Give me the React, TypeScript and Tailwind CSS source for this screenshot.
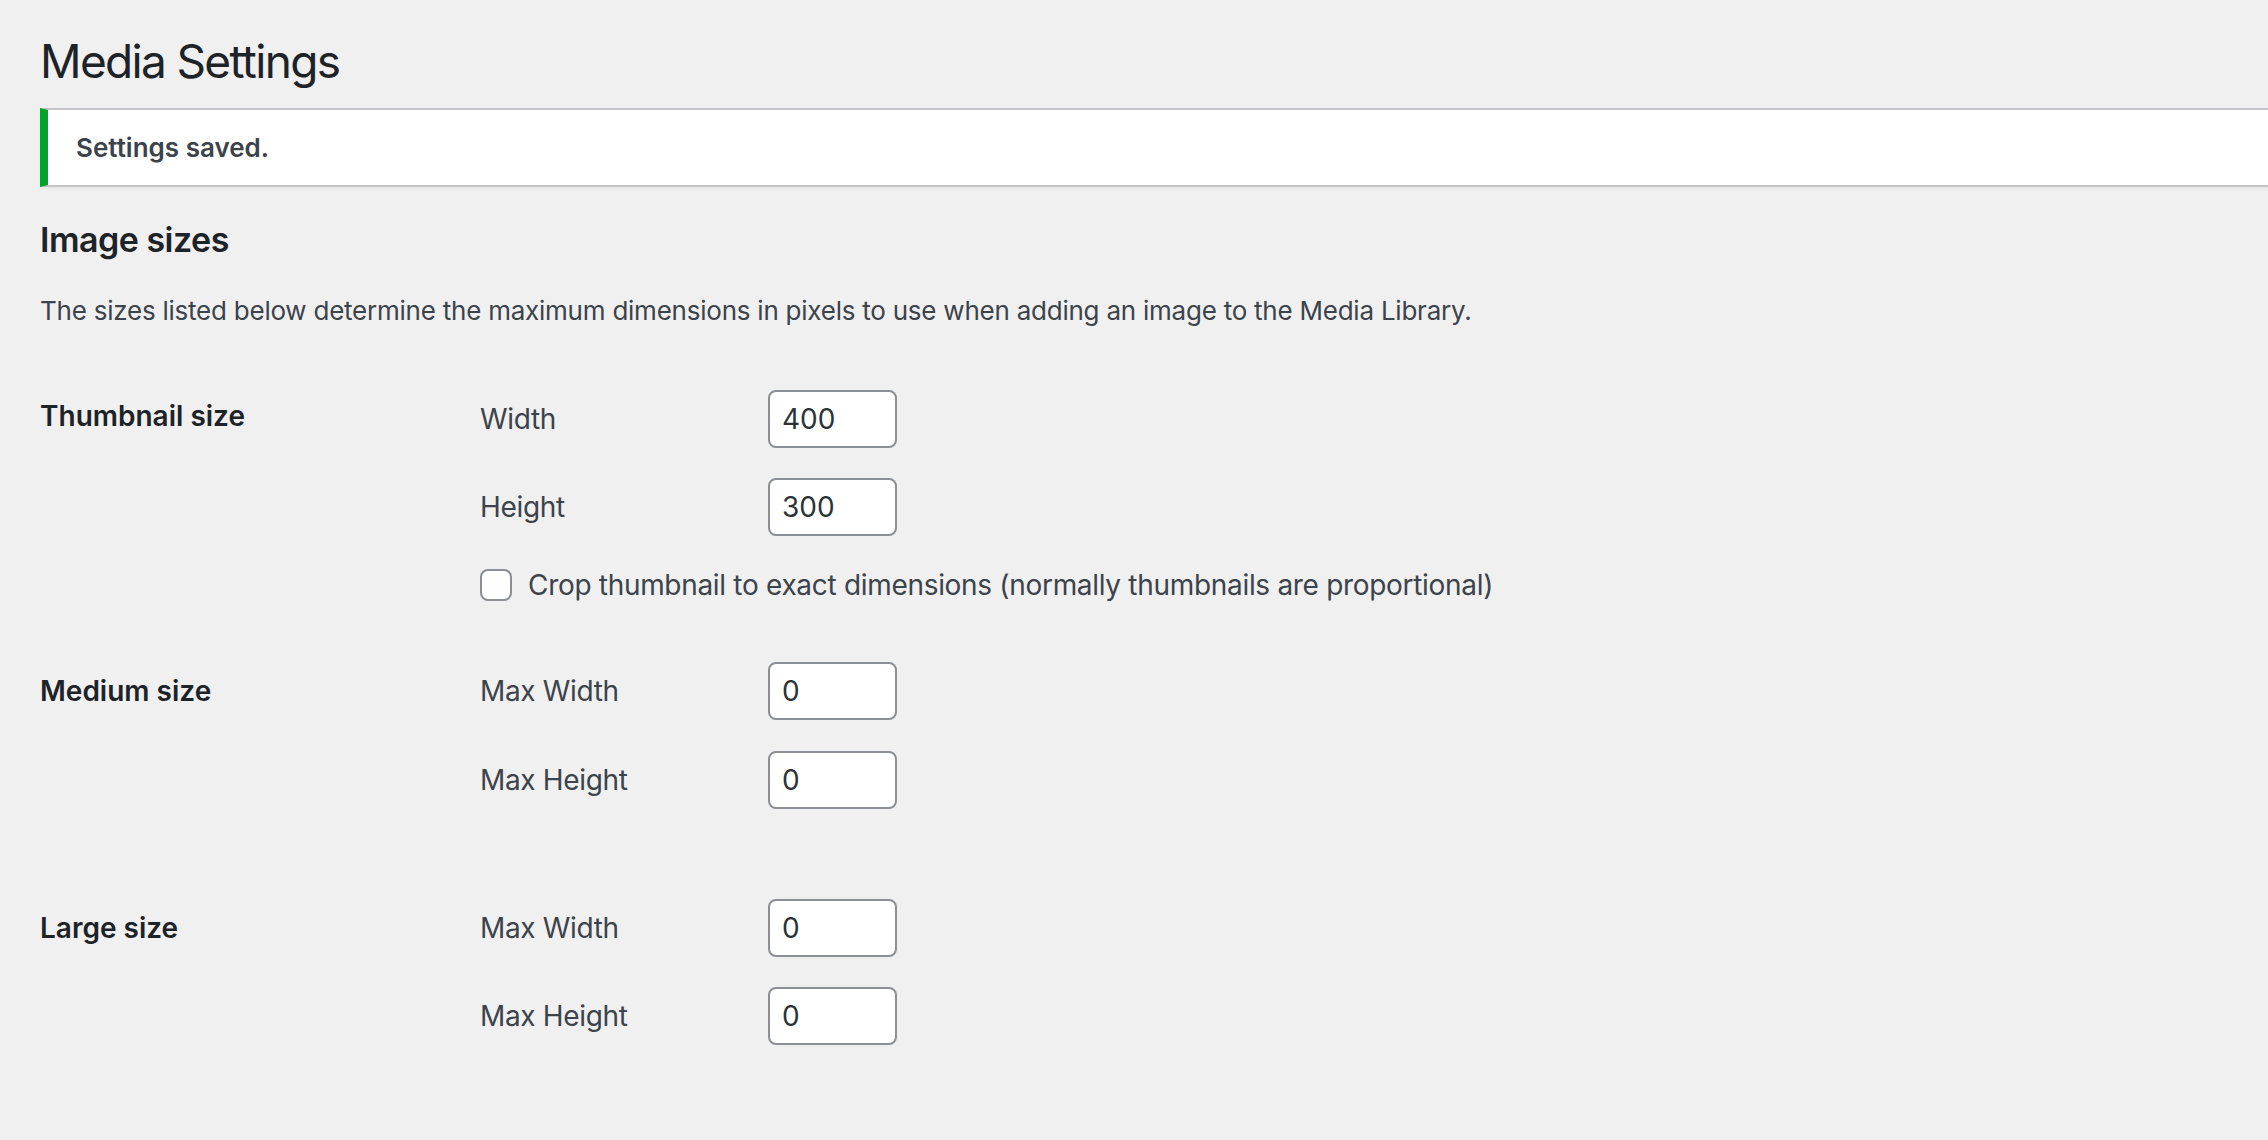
const font = { fontFamily: "Inter, 'Noto Sans', sans-serif" };

function NumberField({ value }: { value: string }) {
  return (
    <input
      type="text"
      defaultValue={value}
      className="w-[129px] h-[58px] rounded-[8px] border-2 border-[#8c8f94] bg-white px-[12px] text-[28px] text-[#2c3338] outline-none"
    />
  );
}

function FieldRow({ label, value }: { label: string; value: string }) {
  return (
    <div className="flex h-[58px] items-center">
      <label className="w-[288px] text-[28px] tracking-[-0.012em] text-[#3c434a]">{label}</label>
      <NumberField value={value} />
    </div>
  );
}

export default function App() {
  return (
    <div
      className="min-h-screen w-full overflow-hidden bg-[#f0f0f1] pl-[40px] pt-[31px]"
      style={font}
    >
      <h1 className="h-[60px] text-[46px] leading-[60px] font-normal text-[#1d2327] tracking-[-0.036em]">
        Media Settings
      </h1>

      <div className="mt-[17px] flex h-[79px] items-center border-y-2 border-l-[8px] border-y-[#c3c4c7] border-l-[#00a32a] bg-white pl-[28px] shadow-[0_2px_2px_rgba(0,0,0,0.04)]">
        <p className="text-[26px] font-semibold text-[#3c434a]">Settings saved.</p>
      </div>

      <h2 className="mt-[31px] h-[44px] text-[34px] leading-[44px] font-semibold tracking-[-0.015em] text-[#1d2327]">
        Image sizes
      </h2>

      <p className="mt-[29px] h-[39px] text-[26px] leading-[39px] tracking-[-0.009em] text-[#3c434a]">
        The sizes listed below determine the maximum dimensions in pixels to use
        when adding an image to the Media Library.
      </p>

      {/* thumbnail */}
      <div className="mt-[60px] flex">
        <div className="flex h-[58px] w-[440px] items-center pb-[6px] text-[28px] font-semibold text-[#1d2327]">
          Thumbnail size
        </div>
        <div className="flex flex-col">
          <FieldRow label="Width" value="400" />
          <div className="mt-[30px]">
            <FieldRow label="Height" value="300" />
          </div>
          <label className="mt-[33px] flex h-[32px] items-center gap-[16px] text-[28px] tracking-[-0.011em] text-[#3c434a]">
            <span className="h-[32px] w-[32px] rounded-[8px] border-2 border-[#8c8f94] bg-white" />
            Crop thumbnail to exact dimensions (normally thumbnails are proportional)
          </label>
        </div>
      </div>

      {/* medium */}
      <div className="mt-[61px] flex">
        <div className="flex h-[58px] w-[440px] items-center text-[28px] font-semibold text-[#1d2327]">
          Medium size
        </div>
        <div className="flex flex-col gap-[31px]">
          <FieldRow label="Max Width" value="0" />
          <FieldRow label="Max Height" value="0" />
        </div>
      </div>

      {/* large */}
      <div className="mt-[90px] flex">
        <div className="flex h-[58px] w-[440px] items-center text-[28px] font-semibold text-[#1d2327]">
          Large size
        </div>
        <div className="flex flex-col gap-[30px]">
          <FieldRow label="Max Width" value="0" />
          <FieldRow label="Max Height" value="0" />
        </div>
      </div>
    </div>
  );
}
